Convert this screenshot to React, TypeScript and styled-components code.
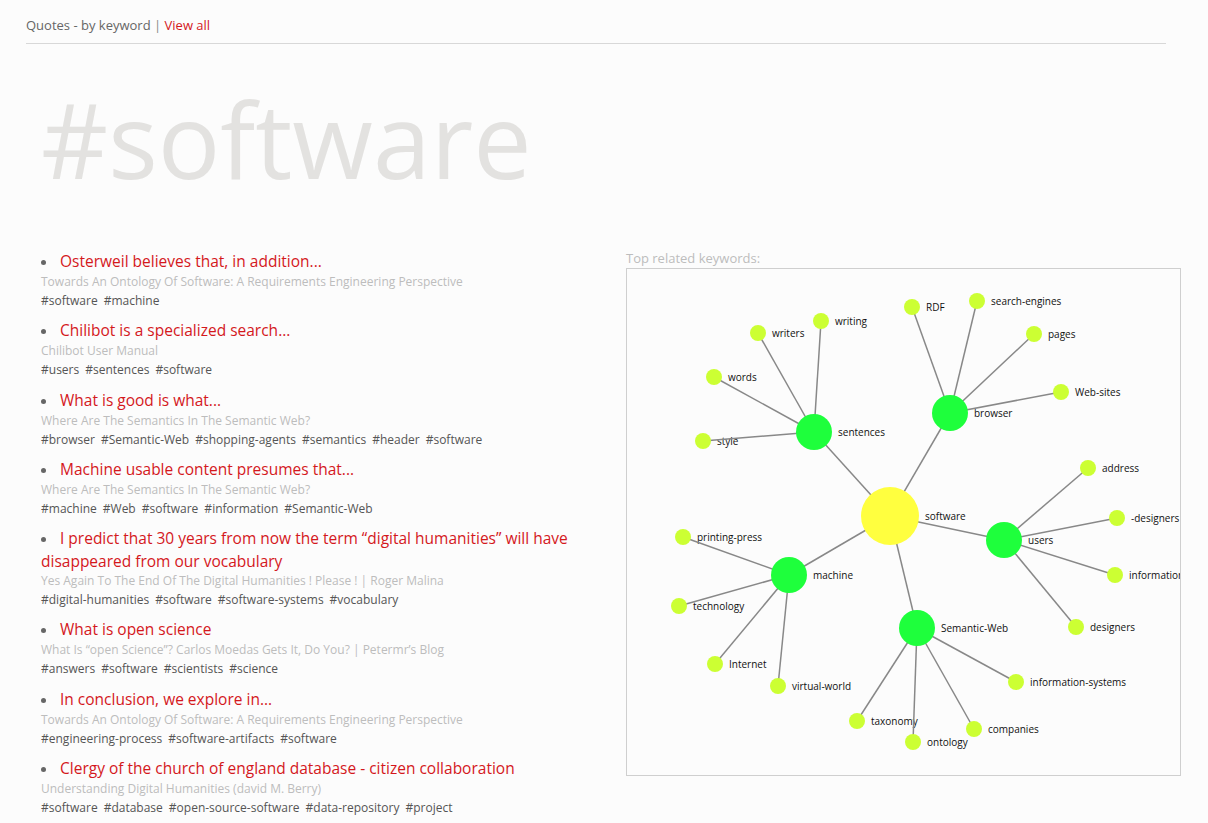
import React, { FC } from 'react';
import styled, { createGlobalStyle } from 'styled-components';

const GlobalStyle = createGlobalStyle`
	html, body {
		margin: 0;
		padding: 0;
		background: #fcfcfc;
		font-family: "Open Sans", "Noto Sans", sans-serif;
	}
`

interface Quote {
	title: string
	source: string
	tags: string[]
}

const quotes: Quote[] = [
	{
		title: 'Osterweil believes that, in addition...',
		source: 'Towards An Ontology Of Software: A Requirements Engineering Perspective',
		tags: ['software', 'machine'],
	},
	{
		title: 'Chilibot is a specialized search...',
		source: 'Chilibot User Manual',
		tags: ['users', 'sentences', 'software'],
	},
	{
		title: 'What is good is what...',
		source: 'Where Are The Semantics In The Semantic Web?',
		tags: ['browser', 'Semantic-Web', 'shopping-agents', 'semantics', 'header', 'software'],
	},
	{
		title: 'Machine usable content presumes that...',
		source: 'Where Are The Semantics In The Semantic Web?',
		tags: ['machine', 'Web', 'software', 'information', 'Semantic-Web'],
	},
	{
		title: 'I predict that 30 years from now the term \u201cdigital humanities\u201d will have disappeared from our vocabulary',
		source: 'Yes Again To The End Of The Digital Humanities ! Please ! | Roger Malina',
		tags: ['digital-humanities', 'software', 'software-systems', 'vocabulary'],
	},
	{
		title: 'What is open science',
		source: 'What Is \u201copen Science\u201d? Carlos Moedas Gets It, Do You? | Petermr\u2019s Blog',
		tags: ['answers', 'software', 'scientists', 'science'],
	},
	{
		title: 'In conclusion, we explore in...',
		source: 'Towards An Ontology Of Software: A Requirements Engineering Perspective',
		tags: ['engineering-process', 'software-artifacts', 'software'],
	},
	{
		title: 'Clergy of the church of england database - citizen collaboration',
		source: 'Understanding Digital Humanities (david M. Berry)',
		tags: ['software', 'database', 'open-source-software', 'data-repository', 'project'],
	},
]

type Kind = 'root' | 'hub' | 'leaf'

interface GraphNode {
	id: string
	x: number
	y: number
	kind: Kind
	parent?: string
}

// coordinates relative to the graph box
const nodes: GraphNode[] = [
	{ id: 'software', x: 263, y: 247, kind: 'root' },
	{ id: 'sentences', x: 187, y: 163, kind: 'hub', parent: 'software' },
	{ id: 'browser', x: 323, y: 144, kind: 'hub', parent: 'software' },
	{ id: 'users', x: 377, y: 271, kind: 'hub', parent: 'software' },
	{ id: 'machine', x: 162, y: 306, kind: 'hub', parent: 'software' },
	{ id: 'Semantic-Web', x: 290, y: 359, kind: 'hub', parent: 'software' },

	{ id: 'writers', x: 131, y: 64, kind: 'leaf', parent: 'sentences' },
	{ id: 'writing', x: 194, y: 52, kind: 'leaf', parent: 'sentences' },
	{ id: 'words', x: 87, y: 108, kind: 'leaf', parent: 'sentences' },
	{ id: 'style', x: 76, y: 172, kind: 'leaf', parent: 'sentences' },

	{ id: 'RDF', x: 285, y: 38, kind: 'leaf', parent: 'browser' },
	{ id: 'search-engines', x: 350, y: 32, kind: 'leaf', parent: 'browser' },
	{ id: 'pages', x: 407, y: 65, kind: 'leaf', parent: 'browser' },
	{ id: 'Web-sites', x: 434, y: 123, kind: 'leaf', parent: 'browser' },

	{ id: 'address', x: 461, y: 199, kind: 'leaf', parent: 'users' },
	{ id: '-designers', x: 490, y: 249, kind: 'leaf', parent: 'users' },
	{ id: 'information', x: 488, y: 306, kind: 'leaf', parent: 'users' },
	{ id: 'designers', x: 449, y: 358, kind: 'leaf', parent: 'users' },

	{ id: 'printing-press', x: 56, y: 268, kind: 'leaf', parent: 'machine' },
	{ id: 'technology', x: 52, y: 337, kind: 'leaf', parent: 'machine' },
	{ id: 'Internet', x: 88, y: 395, kind: 'leaf', parent: 'machine' },
	{ id: 'virtual-world', x: 151, y: 417, kind: 'leaf', parent: 'machine' },

	{ id: 'taxonomy', x: 230, y: 452, kind: 'leaf', parent: 'Semantic-Web' },
	{ id: 'ontology', x: 286, y: 473, kind: 'leaf', parent: 'Semantic-Web' },
	{ id: 'companies', x: 347, y: 460, kind: 'leaf', parent: 'Semantic-Web' },
	{ id: 'information-systems', x: 389, y: 413, kind: 'leaf', parent: 'Semantic-Web' },
]

const radius: Record<Kind, number> = { root: 29, hub: 18, leaf: 8 }
const fill: Record<Kind, string> = { root: '#ffff3f', hub: '#1eff3c', leaf: '#ccff33' }

const byId = (id: string) => nodes.find(n => n.id === id)!

const KeywordGraph: FC = () => (
	<GraphSvg width={553} height={506}>
		{nodes.map(n => (
			<NodeLabel key={`l-${n.id}`} x={n.x + radius[n.kind] + 6} y={n.y} dy="0.35em">
				{n.id}
			</NodeLabel>
		))}
		{nodes.filter(n => n.parent).map(n => {
			const p = byId(n.parent!)
			return <Edge key={`e-${n.id}`} x1={p.x} y1={p.y} x2={n.x} y2={n.y} />
		})}
		{nodes.map(n => (
			<circle key={`c-${n.id}`} cx={n.x} cy={n.y} r={radius[n.kind]} fill={fill[n.kind]} />
		))}
	</GraphSvg>
)

const App: FC = () => (
	<>
		<GlobalStyle />
		<Page>
			<Header>
				Quotes - by keyword <Sep>|</Sep> <HeaderLink href="#">View all</HeaderLink>
			</Header>

			<Keyword>#software</Keyword>

			<Columns>
				<QuoteList>
					{quotes.map((q, i) => (
						<QuoteItem key={i}>
							<QuoteTitle href="#">{q.title}</QuoteTitle>
							<QuoteSource>{q.source}</QuoteSource>
							<TagRow>
								{q.tags.map(t => <Tag key={t}>#{t}</Tag>)}
							</TagRow>
						</QuoteItem>
					))}
				</QuoteList>

				<Related>
					<RelatedLabel>Top related keywords:</RelatedLabel>
					<GraphBox>
						<KeywordGraph />
					</GraphBox>
				</Related>
			</Columns>
		</Page>
	</>
)

export default App


const Page = styled.div`
	padding: 16px 0 0 26px;
	width: 1170px;
`

const Header = styled.div`
	width: 1140px;
	font-size: 13px;
	line-height: 18px;
	color: #666;
	padding-bottom: 9px;
	border-bottom: 1px solid #d8d8d8;
`

const Sep = styled.span`
	color: #888;
`

const HeaderLink = styled.a`
	color: #d4181c;
	text-decoration: none;
`

const Keyword = styled.h1`
	margin: 20px 0 36px 15px;
	font-size: 104px;
	line-height: 150px;
	font-weight: 400;
	color: #e3e2e0;
`

const Columns = styled.div`
	display: grid;
	grid-template-columns: 555px 555px;
	column-gap: 30px;
	margin-left: 15px;
`

const QuoteList = styled.ul`
	margin: 0;
	padding: 0;
	list-style-position: inside;
	list-style-type: disc;
`

const QuoteItem = styled.li`
	margin-bottom: 9.3px;
	color: #666;
	font-size: 15.5px;
	line-height: 22px;

	&::marker {
		font-size: 13px;
	}
`

const QuoteTitle = styled.a`
	color: #d4181c;
	text-decoration: none;
	font-size: 15.5px;
	line-height: 22px;
`

const QuoteSource = styled.div`
	font-size: 12px;
	line-height: 18px;
	color: #bdbdbd;
`

const TagRow = styled.div`
	display: flex;
	flex-wrap: wrap;
	gap: 6px;
	font-size: 12px;
	line-height: 19px;
`

const Tag = styled.span`
	color: #555;
`

const Related = styled.div`
	display: flex;
	flex-direction: column;
`

const RelatedLabel = styled.div`
	font-size: 13px;
	line-height: 16px;
	color: #bdbdbd;
	margin-bottom: 2px;
`

const GraphBox = styled.div`
	width: 553px;
	height: 506px;
	border: 1px solid #cfcfcf;
	overflow: hidden;
`

const GraphSvg = styled.svg`
	display: block;
`

const NodeLabel = styled.text`
	font-family: "Open Sans", sans-serif;
	font-size: 10px;
	fill: #111;
`

const Edge = styled.line`
	stroke: #888;
	stroke-width: 1.5;
`
